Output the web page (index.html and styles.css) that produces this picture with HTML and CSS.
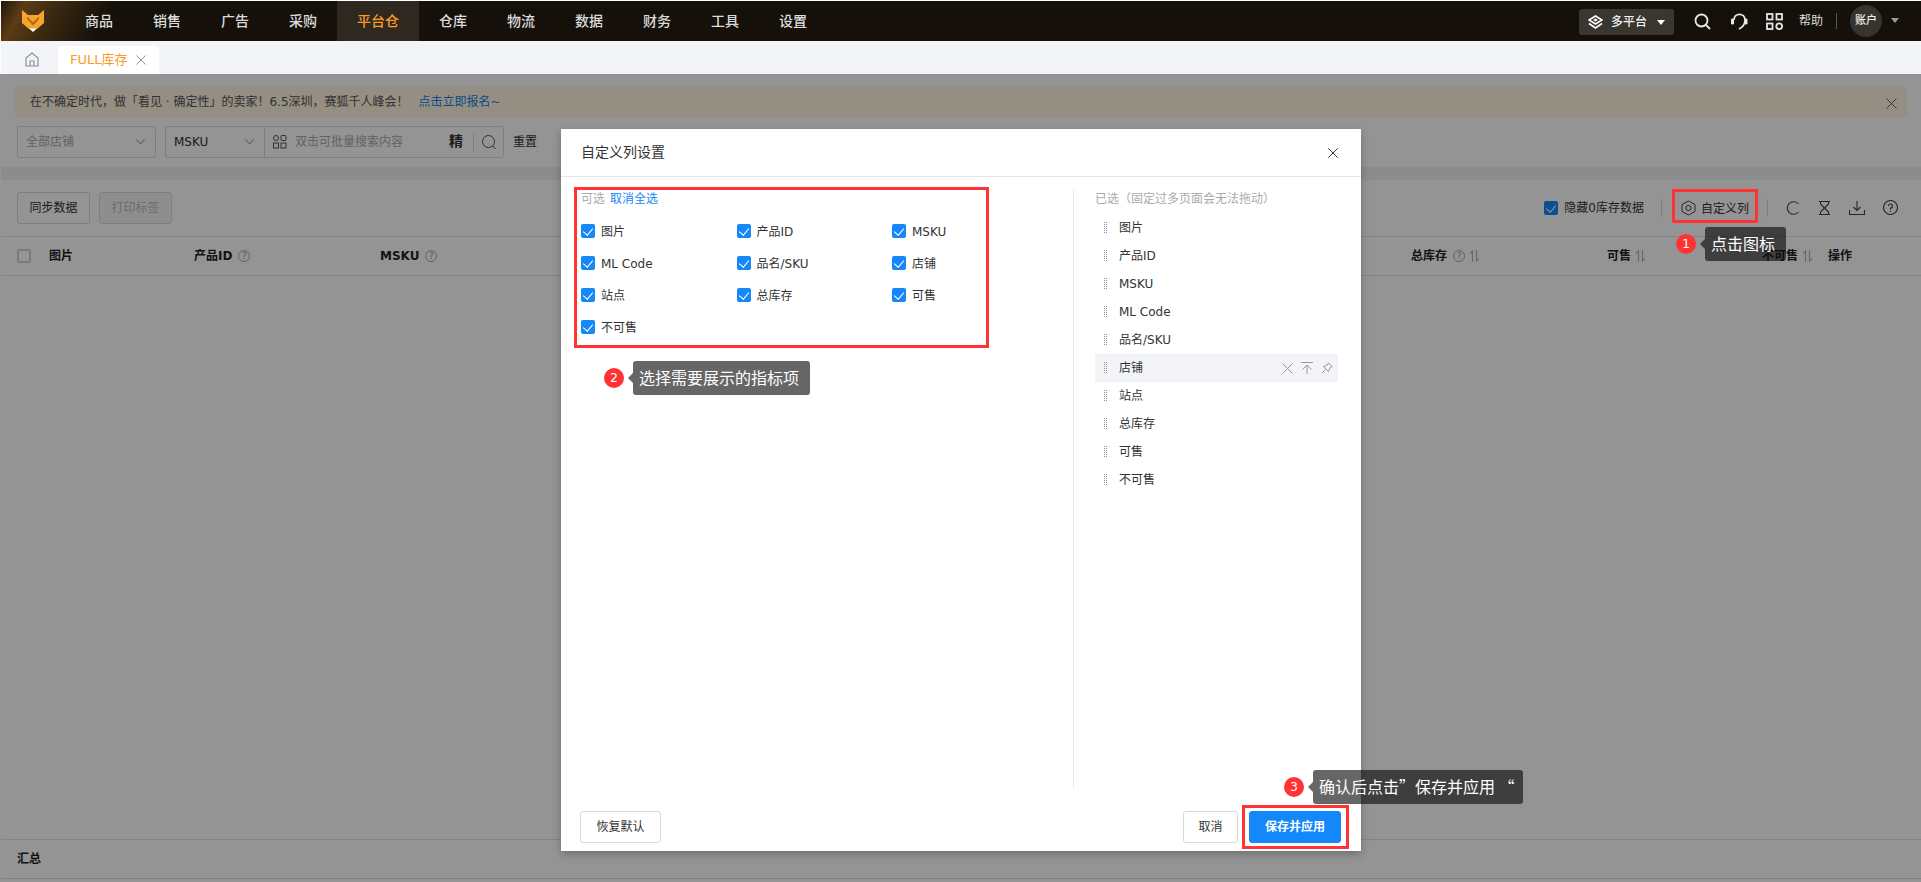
FILE: index.html
```html
<!DOCTYPE html>
<html lang="zh-CN">
<head>
<meta charset="utf-8">
<title>FULL库存</title>
<link rel="stylesheet" href="styles.css">
</head>
<body>
<header class="topbar">
  <div class="logo">
    <svg width="22" height="22" viewBox="0 0 22 22"><path d="M0 0 L6 5 H16 L22 0 V13 L15 19 H7 L0 13 Z" fill="#f7a32c"/><path d="M5 6.5 L11 12.5 L17 6.5 L17 9 L11 15.5 L5 9 Z" fill="#a56c1c"/><path d="M7 18.5 H15 L11 22 Z" fill="#fff"/></svg>
  </div>
  <nav class="nav">
    <a class="nav-item">商品</a><a class="nav-item">销售</a><a class="nav-item">广告</a><a class="nav-item">采购</a><a class="nav-item active">平台仓</a><a class="nav-item">仓库</a><a class="nav-item">物流</a><a class="nav-item">数据</a><a class="nav-item">财务</a><a class="nav-item">工具</a><a class="nav-item">设置</a>
  </nav>
  <div class="top-right">
    <div class="platform">
      <svg width="15" height="14" viewBox="0 0 15 14" fill="none" stroke="#fff" stroke-width="1.6"><path d="M7.5 1 L14 5 L7.5 9 L1 5 Z"/><path d="M1 8.5 L7.5 13 L14 8.5"/><path d="M5.5 5 L7.5 3.8 L9.5 5 L7.5 6.2 Z" fill="#fff" stroke-width=".6"/></svg>
      <span>多平台</span><i class="tri tri-white"></i>
    </div>
    <svg class="top-icon search" width="17" height="17" viewBox="0 0 17 17" fill="none" stroke="#e6e6e6" stroke-width="1.8"><circle cx="7.5" cy="7.5" r="6"/><path d="M12 12 L16 16"/></svg>
    <svg class="top-icon headset" width="18" height="17" viewBox="0 0 18 17" fill="none" stroke="#e6e6e6" stroke-width="1.8"><path d="M4 7 C4 -0.5 15 -0.5 15 7 C15 11 13 14 9 16"/><rect x="1" y="5.5" width="3" height="6" rx="1.3" fill="#e6e6e6" stroke="none"/><rect x="14.5" y="5.5" width="3" height="6" rx="1.3" fill="#e6e6e6" stroke="none"/></svg>
    <svg class="top-icon grid" width="17" height="17" viewBox="0 0 17 17" fill="none" stroke="#e6e6e6" stroke-width="1.8"><rect x="1" y="1" width="5.5" height="5.5"/><rect x="10.5" y="1" width="5.5" height="5.5"/><rect x="1" y="10.5" width="5.5" height="5.5"/><circle cx="13.2" cy="13.2" r="2.9"/></svg>
    <span class="help">帮助</span>
    <i class="top-sep"></i>
    <span class="avatar">账户</span>
    <i class="tri tri-grey"></i>
  </div>
</header>

<div class="tabs">
  <svg class="home" width="14" height="15" viewBox="0 0 14 15" fill="none" stroke="#8a8f99" stroke-width="1.2"><path d="M1 14 V6 L7 1 L13 6 V14 Z"/><path d="M5 14 V9 H9 V14"/></svg>
  <div class="tab"><span>FULL库存</span><svg width="10" height="10" viewBox="0 0 10 10" stroke="#8a8f99" stroke-width="1"><path d="M.5.5 L9.5 9.5 M9.5.5 L.5 9.5"/></svg></div>
</div>

<main class="main">
  <div class="banner">
    <span>在不确定时代，做「看见 · 确定性」的卖家！6.5深圳，赛狐千人峰会！</span><a class="banner-link">点击立即报名~</a>
    <svg class="banner-close" width="11" height="11" viewBox="0 0 11 11" stroke="#666" stroke-width="1"><path d="M.5.5 L10.5 10.5 M10.5.5 L.5 10.5"/></svg>
  </div>
  <div class="filters">
    <div class="select store"><span class="ph">全部店铺</span><svg class="chev" width="9" height="6" viewBox="0 0 9 6" fill="none" stroke="#888" stroke-width="1"><path d="M.5.5 L4.5 5 L8.5.5"/></svg></div>
    <div class="searchbox">
      <div class="sb-type"><span>MSKU</span><svg class="chev" width="9" height="6" viewBox="0 0 9 6" fill="none" stroke="#888" stroke-width="1"><path d="M.5.5 L4.5 5 L8.5.5"/></svg></div>
      <div class="sb-input">
        <svg width="14" height="14" viewBox="0 0 14 14" fill="none" stroke="#555" stroke-width="1"><rect x=".5" y=".5" width="5" height="5" rx="2.5"/><rect x="8" y=".5" width="5" height="5" rx="1"/><rect x=".5" y="8" width="5" height="5"/><rect x="8" y="8" width="5" height="5"/></svg>
        <span class="ph grow">双击可批量搜索内容</span>
        <b class="jing">精</b><i class="sb-sep"></i>
        <svg width="14" height="15" viewBox="0 0 14 15" fill="none" stroke="#555" stroke-width="1"><circle cx="6.5" cy="6.5" r="6"/><path d="M11 11 L13.5 14"/></svg>
      </div>
    </div>
    <span class="reset">重置</span>
  </div>
  <div class="strip"></div>
  <div class="toolbar">
    <button class="btn tool-btn">同步数据</button>
    <button class="btn tool-btn disabled">打印标签</button>
    <div class="tool-right">
      <label class="hide0"><i class="check dim"></i><span>隐藏0库存数据</span></label>
      <i class="tool-sep"></i>
      <div class="custom">
        <svg width="15" height="16" viewBox="0 0 15 16" fill="none" stroke="#444" stroke-width="1"><path d="M7.5 1 L14 4.5 V11.5 L7.5 15 L1 11.5 V4.5 Z"/><circle cx="7.5" cy="8" r="2.6"/></svg>
        <span>自定义列</span>
      </div>
      <i class="tool-sep"></i>
      <svg class="tool-icon" width="14" height="14" viewBox="0 0 14 14" fill="none" stroke="#444" stroke-width="1.1"><path d="M12.5 3 A6.3 6.3 0 1 0 12.5 11"/></svg>
      <svg class="tool-icon" width="13" height="14" viewBox="0 0 13 14" fill="none" stroke="#444" stroke-width="1.1"><path d="M1 .5 H12 M1 13.5 H12 M2.5 .5 V3 L10.5 11 V13.5 M10.5 .5 V3 L2.5 11 V13.5"/></svg>
      <svg class="tool-icon" width="16" height="14" viewBox="0 0 16 14" fill="none" stroke="#444" stroke-width="1.1"><path d="M8 0 V9 M4.5 6 L8 9.5 L11.5 6 M.5 9 V13.5 H15.5 V9"/></svg>
      <svg class="tool-icon" width="15" height="15" viewBox="0 0 15 15" fill="none" stroke="#444" stroke-width="1.1"><circle cx="7.5" cy="7.5" r="7"/><path d="M5.5 6 A2 2 0 1 1 7.5 8 V9.5 M7.5 10.8 V12"/></svg>
    </div>
  </div>
  <div class="thead">
    <div class="th"><i class="check empty"></i></div>
    <div class="th">图片</div>
    <div class="th">产品ID<i class="q">?</i></div>
    <div class="th">MSKU<i class="q">?</i></div>
    <div class="th">总库存<i class="q">?</i><svg class="sort" width="9" height="12" viewBox="0 0 9 12" fill="none" stroke="#b5b5b5" stroke-width="1.2"><path d="M2.5 12 V1 L0 3.5 M6.5 0 V11 L9 8.5"/></svg></div>
    <div class="th">可售<svg class="sort" width="9" height="12" viewBox="0 0 9 12" fill="none" stroke="#b5b5b5" stroke-width="1.2"><path d="M2.5 12 V1 L0 3.5 M6.5 0 V11 L9 8.5"/></svg></div>
    <div class="th">不可售<svg class="sort" width="9" height="12" viewBox="0 0 9 12" fill="none" stroke="#b5b5b5" stroke-width="1.2"><path d="M2.5 12 V1 L0 3.5 M6.5 0 V11 L9 8.5"/></svg></div>
    <div class="th">操作</div>
  </div>
  <div class="tbody"></div>
  <div class="summary">汇总</div>

  <div class="mask"></div>

  <section class="modal">
    <div class="modal-head">
      <h2>自定义列设置</h2>
      <svg width="10" height="10" viewBox="0 0 10 10" stroke="#333" stroke-width="1"><path d="M.3.3 L9.7 9.7 M9.7.3 L.3 9.7"/></svg>
    </div>
    <div class="modal-body">
      <div class="pick">
        <div class="pick-head"><span class="muted">可选</span><a class="link">取消全选</a></div>
        <div class="pick-grid">
          <label class="opt"><i class="check"></i>图片</label>
          <label class="opt"><i class="check"></i>产品ID</label>
          <label class="opt"><i class="check"></i>MSKU</label>
          <label class="opt"><i class="check"></i>ML Code</label>
          <label class="opt"><i class="check"></i>品名/SKU</label>
          <label class="opt"><i class="check"></i>店铺</label>
          <label class="opt"><i class="check"></i>站点</label>
          <label class="opt"><i class="check"></i>总库存</label>
          <label class="opt"><i class="check"></i>可售</label>
          <label class="opt"><i class="check"></i>不可售</label>
        </div>
      </div>
      <div class="chosen">
        <div class="muted chosen-head">已选（固定过多页面会无法拖动）</div>
        <div class="row"><i class="drag"></i>图片</div>
        <div class="row"><i class="drag"></i>产品ID</div>
        <div class="row"><i class="drag"></i>MSKU</div>
        <div class="row"><i class="drag"></i>ML Code</div>
        <div class="row"><i class="drag"></i>品名/SKU</div>
        <div class="row hover"><i class="drag"></i><span class="grow">店铺</span>
          <span class="row-icons">
          <svg width="11" height="11" viewBox="0 0 11 11" stroke="#999" stroke-width="1"><path d="M.5.5 L10.5 10.5 M10.5.5 L.5 10.5"/></svg>
          <svg width="12" height="12" viewBox="0 0 12 12" fill="none" stroke="#999" stroke-width="1"><path d="M0 .5 H12 M6 12 V3 M1.5 7.5 L6 3 L10.5 7.5"/></svg>
          <svg width="12" height="12" viewBox="0 0 12 12" fill="none" stroke="#999" stroke-width="1"><path d="M7.5 .8 L11.2 4.5 L9 5.5 L7.5 9.5 L2.5 4.5 L6.5 3 Z M4.5 7.5 L1 11"/></svg>
          </span>
        </div>
        <div class="row"><i class="drag"></i>站点</div>
        <div class="row"><i class="drag"></i>总库存</div>
        <div class="row"><i class="drag"></i>可售</div>
        <div class="row"><i class="drag"></i>不可售</div>
      </div>
    </div>
    <div class="modal-foot">
      <button class="btn mbtn">恢复默认</button>
      <span class="grow"></span>
      <button class="btn mbtn cancel">取消</button>
      <button class="btn mbtn primary">保存并应用</button>
    </div>

    <div class="redbox box-pick"></div>
    <div class="note note-2"><b class="dot">2</b><span class="tip tip-light">选择需要展示的指标项</span></div>
  </section>

  <div class="redbox box-custom"></div>
  <div class="note note-1"><b class="dot">1</b><span class="tip">点击图标</span></div>
  <div class="redbox box-save"></div>
  <div class="note note-3"><b class="dot">3</b><span class="tip tip-long">确认后点击”保存并应用 “</span></div>
</main>
</body>
</html>
```
FILE: styles.css
```css
* { box-sizing: border-box; }
html, body { height: 100%; }
body {
  margin: 0;
  padding: 1px 0 0 1px;
  height: 882px;
  overflow: hidden;
  display: flex;
  flex-direction: column;
  background: #fff;
  color: #333;
  font: 12px/1.4 "DejaVu Sans", "Noto Sans CJK SC", sans-serif;
}
i { font-style: normal; }
.grow { flex: 1; }

.topbar {
  height: 40px;
  flex: none;
  display: flex;
  align-items: center;
  background: linear-gradient(120deg, #20160c 0, #5c3c14 22px, #3b2a10 50px, #15100a 100px);
  color: #e8e8e8;
}
.logo { width: 64px; padding-left: 21px; display: flex; }
.nav { display: flex; height: 100%; }
.nav-item { padding: 0 20px; font-size: 14px; line-height: 40px; color: #dcdcdc; font-weight: 500; }
.nav-item.active { background: #2e2820; color: #fa9a28; }
.top-right { margin-left: auto; display: flex; align-items: center; padding-right: 22px; }
.platform {
  width: 95px; height: 26px;
  display: flex; align-items: center;
  padding-left: 9px;
  border-radius: 3px;
  background: #3a3630;
  color: #f0f0f0;
  font-weight: 500;
  margin-top: 2px;
}
.platform span { margin-left: 8px; }
.tri { width: 0; height: 0; border-style: solid; border-width: 5px 4px 0; }
.tri-white { border-color: #fff transparent transparent; margin-left: 10px; }
.tri-grey { border-color: #999 transparent transparent; margin-left: 9px; margin-top: -2px; }
.top-icon { flex: none; }
.search { margin-left: 20px; }
.headset { margin-left: 19px; }
.grid { margin-left: 18px; }
.help { margin-left: 16px; color: #ddd; }
.top-sep { width: 1px; height: 16px; background: #555; margin: 0 13px 0 13px; }
.avatar {
  width: 32px; height: 32px;
  border-radius: 50%;
  background: #37332d;
  color: #eee;
  font-size: 11px;
  font-weight: 500;
  line-height: 32px;
  text-align: center;
}

.tabs {
  height: 33px;
  flex: none;
  display: flex;
  align-items: flex-end;
  background: #f2f4f8;
  padding-left: 24px;
}
.home { margin-bottom: 7px; margin-right: 18.5px; }
.tab {
  width: 101px; height: 28px;
  display: flex; align-items: center;
  padding-left: 12.5px;
  gap: 8.5px;
  background: #fff;
  border-radius: 3px 3px 0 0;
  color: #fa9a28;
  font-size: 13px;
}

.main { position: relative; flex: 1; display: flex; flex-direction: column; min-height: 0; margin-left: -1px; padding-left: 1px; background: #fff; }
.banner {
  height: 30px;
  margin: 13px 14px 9px 14px;
  flex: none;
  display: flex; align-items: center;
  padding-left: 15px;
  background: #fff4e2;
  border-radius: 2px;
  color: #555;
  position: relative;
}
.banner-link { color: #1483e8; margin-left: 10px; }
.banner-close { position: absolute; right: 10px; top: 11px; }
.filters { height: 32px; flex: none; display: flex; align-items: center; padding-left: 16px; margin-bottom: 9px; }
.select {
  width: 139px; height: 32px;
  display: flex; align-items: center; justify-content: space-between;
  padding: 0 10px 0 8px;
  border: 1px solid #d9d9d9;
  border-radius: 3px;
}
.ph { color: #aaa; }
.searchbox {
  width: 339px; height: 32px;
  margin-left: 9px;
  display: flex;
  border: 1px solid #d9d9d9;
  border-radius: 3px;
}
.sb-type {
  width: 99px;
  display: flex; align-items: center; justify-content: space-between;
  padding: 0 10px 0 8px;
  border-right: 1px solid #d9d9d9;
}
.sb-input { flex: 1; display: flex; align-items: center; padding: 0 7px 0 8px; }
.sb-input .ph { margin-left: 8px; }
.jing { font-size: 14px; font-weight: 700; }
.sb-sep { width: 1px; height: 18px; background: #d9d9d9; margin: 0 8px 0 10px; }
.reset { margin-left: 9px; }
.strip { height: 13px; flex: none; background: #eff1f5; }
.toolbar {
  height: 57px;
  flex: none;
  display: flex; align-items: center;
  padding: 0 23px 0 16px;
  gap: 9px;
  border-bottom: 1px solid #e4e4e4;
}
.btn {
  height: 32px;
  padding: 0;
  font: inherit;
  color: #333;
  background: #fff;
  border: 1px solid #d9d9d9;
  border-radius: 3px;
}
.tool-btn { width: 73px; }
.btn.disabled { color: #bbb; background: #f5f5f5; }
.tool-right { margin-left: auto; display: flex; align-items: center; }
.hide0 { display: flex; align-items: center; gap: 6px; margin-right: 17px; }
.tool-sep { width: 1px; height: 18px; background: #d9d9d9; flex: none; }
.custom { display: flex; align-items: center; gap: 5px; margin: 0 18px 0 19px; white-space: nowrap; }
.custom span { margin-top: 3px; }
.tool-icon { margin-left: 18px; flex: none; }
.check {
  display: block;
  flex: none;
  position: relative;
  width: 14px; height: 14px;
  border-radius: 2px;
  background: #1488f8;
}
.check::after {
  content: "";
  position: absolute;
  left: 4px; top: 2px;
  width: 5px; height: 8px;
  border: solid #fff;
  border-width: 0 1.2px 1.2px 0;
  transform: rotate(40deg);
}
.check.empty { background: #fff; border: 2px solid #d4d4d4; }
.check.empty::after { display: none; }
.thead {
  height: 39px;
  flex: none;
  display: grid;
  grid-template-columns: 48px 145px 186px 1031px 196px 155px 66px 1fr;
  align-items: center;
  border-bottom: 1px solid #e4e4e4;
  font-weight: 700;
  color: #222;
}
.th { display: flex; align-items: center; }
.th:first-child { padding-left: 16px; }
.q {
  width: 12px; height: 12px;
  margin-left: 6px;
  border: 1px solid #aaa;
  border-radius: 50%;
  color: #999;
  font-size: 9px;
  font-weight: 400;
  line-height: 10px;
  text-align: center;
}
.sort { margin-left: 5px; }
.tbody { flex: 1; }
.summary {
  height: 40px;
  flex: none;
  margin-bottom: 3px;
  display: flex; align-items: center;
  padding-left: 16px;
  border-top: 1px solid #e4e4e4;
  border-bottom: 1px solid #e0e0e0;
  font-weight: 700;
  color: #222;
}
.mask { position: absolute; inset: 0; background: rgba(0, 0, 0, .42); }

.modal {
  position: absolute;
  left: 561px; top: 55px;
  width: 800px; height: 722px;
  display: flex;
  flex-direction: column;
  background: #fff;
  box-shadow: 0 3px 8px rgba(0, 0, 0, .25);
}
.modal-head {
  height: 48px;
  flex: none;
  display: flex; align-items: center; justify-content: space-between;
  padding: 0 23px 0 20px;
  border-bottom: 1px solid #e4e4e4;
}
.modal-head h2 { margin: 0; font-size: 14px; font-weight: 400; color: #333; }
.modal-body { flex: 1; display: flex; padding-top: 12px; min-height: 0; }
.pick { width: 513px; padding-left: 20px; border-right: 1px solid #e8e8e8; margin-bottom: 23px; }
.pick-head { display: flex; gap: 5px; height: 18px; align-items: center; margin-top: 1px; }
.muted { color: #aaa; }
.link { color: #1488f8; }
.pick-grid { display: grid; grid-template-columns: repeat(3, 155.5px); grid-auto-rows: 32px; margin-top: 8px; }
.opt { display: flex; align-items: center; gap: 6px; }
.opt .check { margin-top: -2px; }
.chosen { width: 243px; margin-left: 21px; padding-top: 1px; }
.chosen-head { height: 18px; margin-bottom: 6px; display: flex; align-items: center; }
.row { height: 28px; display: flex; align-items: center; padding: 0 5px 0 8px; gap: 6px; }
.row.hover { background: #f2f4f8; }
.row-icons { display: flex; align-items: center; gap: 8px; }
.drag {
  width: 5px; height: 12px;
  margin-right: 5px;
  background: conic-gradient(#8f8f8f 25%, transparent 0) 0 0 / 2px 2px;
}
.modal-foot { height: 32px; flex: none; display: flex; padding: 0 20px 0 19px; gap: 11px; margin-bottom: 8px; }
.mbtn { width: 81px; }
.mbtn.cancel { width: 55px; }
.mbtn.primary { width: 92px; color: #fff; background: #1488f8; border-color: #1488f8; font-weight: 700; }

.redbox { position: absolute; border: 3px solid #f33; pointer-events: none; }
.box-pick { left: 13px; top: 58px; width: 415px; height: 161px; }
.box-custom { left: 1672px; top: 115px; width: 86px; height: 34px; }
.box-save { left: 1242px; top: 731px; width: 107px; height: 44px; }

.note { position: absolute; display: flex; align-items: center; height: 34px; }
.note-1 { left: 1676px; top: 153px; }
.note-2 { left: 43px; top: 232px; }
.note-3 { left: 1284px; top: 696px; }
.dot {
  width: 20px; height: 20px;
  border-radius: 50%;
  background: #f33;
  color: #fff;
  font-size: 12px;
  font-weight: 400;
  line-height: 20px;
  text-align: center;
}
.tip {
  position: relative;
  margin-left: 9px;
  height: 34px;
  padding: 0 11px 0 6px;
  border-radius: 3px;
  background: rgba(12, 12, 12, .63);
  color: #fff;
  font-family: "Noto Sans CJK SC", sans-serif;
  font-size: 16px;
  line-height: 33px;
  white-space: nowrap;
}
.tip-long { padding-right: 8px; }
.tip::before {
  content: "";
  position: absolute;
  left: -5px; top: 12px;
  border-style: solid;
  border-width: 5px 5px 5px 0;
  border-color: transparent rgba(12, 12, 12, .63) transparent transparent;
}
```
